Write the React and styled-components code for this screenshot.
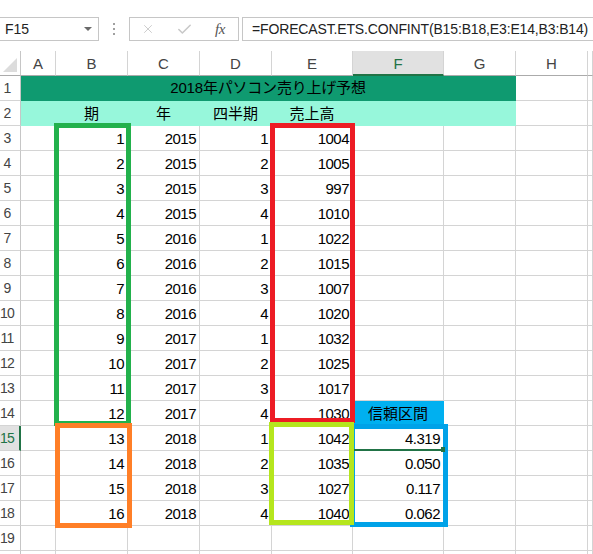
import styled, { createGlobalStyle } from 'styled-components';
import { X, Check } from 'lucide-react';

const GlobalStyle = createGlobalStyle`
  body {
    margin: 0;
    background: #ffffff;
    overflow: hidden;
    font-family: "Liberation Sans", "Noto Sans CJK JP", sans-serif;
  }
`;

const LETTERS = ['A', 'B', 'C', 'D', 'E', 'F', 'G', 'H', ''];
const HEADINGS = ['', '期', '年', '四半期', '売上高', '', ''];
const SALES = [1004, 1005, 997, 1010, 1022, 1015, 1007, 1020, 1032, 1025, 1017, 1030, 1042, 1035, 1027, 1040];
const CONF = ['4.319', '0.050', '0.117', '0.062'];

// rows 3..20 (row 20 is only a sliver at the bottom edge)
const rows = Array.from({ length: 18 }, (_, i) => {
  const n = i + 3;
  const k = n - 3;
  if (n > 18) return { n, label: n < 20 ? String(n) : '', cells: Array(9).fill('') };
  return {
    n,
    label: String(n),
    cells: [
      '',
      String(k + 1),
      String(2015 + Math.floor(k / 4)),
      String((k % 4) + 1),
      String(SALES[k]),
      n >= 15 ? CONF[n - 15] : '',
      '',
      '',
      '',
    ],
  };
});

const App = () => {
  return (
    <Page>
      <GlobalStyle />
      <FormulaBar>
        <NameBox>
          F15
          <DropArrow />
        </NameBox>
        <Grip>
          <i />
          <i />
          <i />
        </Grip>
        <FxButtons>
          <FxButton>
            <X size={14} strokeWidth={1.3} color="#bdbdbd" />
          </FxButton>
          <FxButton>
            <Check size={17} strokeWidth={2.2} color="#c8c8c8" />
          </FxButton>
          <FxButton>
            <FxLabel>fx</FxLabel>
          </FxButton>
        </FxButtons>
        <FormulaInput>=FORECAST.ETS.CONFINT(B15:B18,E3:E14,B3:B14)</FormulaInput>
      </FormulaBar>

      <SheetWrap>
        <Sheet>
          <Corner />
          {LETTERS.map((l, i) => (
            <ColHead key={i} $active={l === 'F'}>
              {l}
            </ColHead>
          ))}

          <RowHead>1</RowHead>
          <TitleCell>2018年パソコン売り上げ予想</TitleCell>
          <Cell />
          <Cell />

          <RowHead>2</RowHead>
          {HEADINGS.map((h, i) => (
            <HeadingCell key={i}>{h}</HeadingCell>
          ))}
          <Cell />
          <Cell />

          {rows.map((r) => [
            <RowHead key={`h${r.n}`} $active={r.n === 15}>
              {r.label}
            </RowHead>,
            ...r.cells.map((c, j) =>
              r.n === 14 && j === 5 ? (
                <BandCell key={`${r.n}-${j}`}>信頼区間</BandCell>
              ) : (
                <Cell key={`${r.n}-${j}`}>{c}</Cell>
              )
            ),
          ])}
        </Sheet>

        <Frame $x={54} $y={72} $w={77} $h={303} $color="#22b14c" />
        <Frame $x={270} $y={72} $w={85} $h={300} $color="#ed1c24" />
        <Frame $x={55} $y={372} $w={77} $h={105} $color="#ff7f27" />
        <Frame $x={350} $y={373} $w={98} $h={103} $color="#00a2e8" />
        <Frame $x={269} $y={371} $w={85} $h={103} $color="#b5e61d" />
        <Selection />
      </SheetWrap>
    </Page>
  );
};

export default App;

const Page = styled.div`
  width: 593px;
  height: 554px;
  overflow: hidden;
  background: #ffffff;
`;

const FormulaBar = styled.div`
  display: flex;
  align-items: stretch;
  height: 24px;
  margin-top: 17px;
  margin-bottom: 10px;
  font-size: 14px;
  color: #222;
`;

const NameBox = styled.div`
  width: 99px;
  box-sizing: border-box;
  border: 1px solid #c6c6c6;
  border-left: none;
  display: flex;
  align-items: center;
  justify-content: space-between;
  padding: 0 6px 0 5px;
`;

const DropArrow = styled.span`
  width: 0;
  height: 0;
  border-left: 4px solid transparent;
  border-right: 4px solid transparent;
  border-top: 4px solid #6a6a6a;
`;

const Grip = styled.div`
  width: 30px;
  display: flex;
  flex-direction: column;
  align-items: center;
  justify-content: center;
  gap: 3px;

  i {
    width: 2px;
    height: 2px;
    background: #a0a0a0;
  }
`;

const FxButtons = styled.div`
  width: 110px;
  box-sizing: border-box;
  border: 1px solid #c6c6c6;
  display: flex;
`;

const FxButton = styled.div`
  flex: 1;
  display: flex;
  align-items: center;
  justify-content: center;
`;

const FxLabel = styled.span`
  font-family: "Liberation Serif", serif;
  font-style: italic;
  font-size: 15px;
  color: #555;
  letter-spacing: -0.5px;
`;

const FormulaInput = styled.div`
  flex: 1;
  margin-left: 3px;
  box-sizing: border-box;
  border: 1px solid #c6c6c6;
  border-right: none;
  display: flex;
  align-items: center;
  padding-left: 9px;
  letter-spacing: -0.15px;
  white-space: nowrap;
  overflow: hidden;
`;

const SheetWrap = styled.div`
  position: relative;
`;

const Sheet = styled.div`
  display: grid;
  grid-template-columns: 21px 35px 72px 72px 72px 81px 91px 72px 72px 1fr;
  grid-auto-rows: 25px;
  font-size: 15px;
  color: #000;
`;

const Corner = styled.div`
  box-sizing: border-box;
  border-right: 1px solid #c6c6c6;
  border-bottom: 1px solid #ababab;
  position: relative;

  &::after {
    content: '';
    position: absolute;
    right: 3px;
    bottom: 3px;
    width: 0;
    height: 0;
    border-left: 14px solid transparent;
    border-bottom: 14px solid #dcdcdc;
  }
`;

const ColHead = styled.div`
  box-sizing: border-box;
  border-right: 1px solid #d4d4d4;
  border-bottom: ${(p) => (p.$active ? '2px solid #217346' : '1px solid #ababab')};
  background: ${(p) => (p.$active ? '#e1e1e1' : '#ffffff')};
  color: ${(p) => (p.$active ? '#217346' : '#444')};
  display: flex;
  align-items: center;
  justify-content: center;
  padding-top: 1px;
`;

const RowHead = styled.div`
  box-sizing: border-box;
  border-right: ${(p) => (p.$active ? '2px solid #217346' : '1px solid #c6c6c6')};
  border-bottom: 1px solid #d4d4d4;
  background: ${(p) => (p.$active ? '#e1e1e1' : '#ffffff')};
  color: ${(p) => (p.$active ? '#217346' : '#444')};
  text-align: center;
  padding-right: 6px;
  line-height: 25px;
  font-size: 14px;
  letter-spacing: -0.8px;
`;

const Cell = styled.div`
  box-sizing: border-box;
  border-right: 1px solid #d4d4d4;
  border-bottom: 1px solid #d4d4d4;
  text-align: right;
  padding-right: 3px;
  line-height: 25px;
  letter-spacing: -0.5px;
  white-space: nowrap;
  overflow: hidden;
`;

const TitleCell = styled.div`
  grid-column: span 7;
  box-sizing: border-box;
  background: #0f9a70;
  border-right: 1px solid #0f9a70;
  border-bottom: 1px solid #0f9a70;
  text-align: center;
  line-height: 24px;
  letter-spacing: -0.2px;
`;

const HeadingCell = styled.div`
  box-sizing: border-box;
  background: #97f7db;
  border-right: 1px solid #97f7db;
  border-bottom: 1px solid #97f7db;
  text-align: center;
  line-height: 25px;
`;

const BandCell = styled.div`
  box-sizing: border-box;
  background: #00b0f0;
  border-right: 1px solid #00b0f0;
  border-bottom: 1px solid #00b0f0;
  text-align: center;
  line-height: 25px;
`;

const Frame = styled.div`
  position: absolute;
  left: ${(p) => p.$x}px;
  top: ${(p) => p.$y}px;
  width: ${(p) => p.$w}px;
  height: ${(p) => p.$h}px;
  box-sizing: border-box;
  border: 5px solid ${(p) => p.$color};
  pointer-events: none;
`;

const Selection = styled.div`
  position: absolute;
  left: 354px;
  top: 398px;
  width: 88px;
  height: 2px;
  background: #217346;

  &::after {
    content: '';
    position: absolute;
    right: -3px;
    top: -2px;
    width: 4px;
    height: 5px;
    background: #217346;
  }
`;
